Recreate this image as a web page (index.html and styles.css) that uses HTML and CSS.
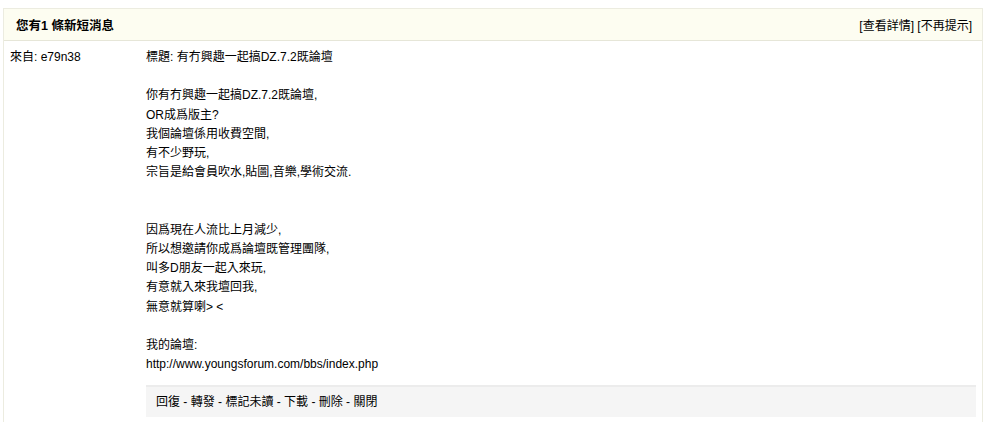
FILE: index.html
```html
<!DOCTYPE html>
<html lang="zh-Hant">
<head>
<meta charset="utf-8">
<title>短消息</title>
<link rel="stylesheet" href="styles.css">
</head>
<body>
<div class="box">
  <div class="head">
    <span class="title">您有1 條新短消息</span>
    <span class="links"><a href="#">[查看詳情]</a> <a href="#">[不再提示]</a></span>
  </div>
  <div class="content">
    <div class="from">來自: e79n38</div>
    <div class="msg">
      <div class="subject">標題: 有冇興趣一起搞DZ.7.2既論壇</div>
      <div class="text">
        <p>你有冇興趣一起搞DZ.7.2既論壇,<br>OR成爲版主?<br>我個論壇係用收費空間,<br>有不少野玩,<br>宗旨是給會員吹水,貼圖,音樂,學術交流.</p>
        <p class="gap2">因爲現在人流比上月減少,<br>所以想邀請你成爲論壇既管理團隊,<br>叫多D朋友一起入來玩,<br>有意就入來我壇回我,<br>無意就算喇&gt; &lt;</p>
        <p>我的論壇:<br>http://www.youngsforum.com/bbs/index.php</p>
      </div>
      <div class="actions"><a href="#">回復</a> - <a href="#">轉發</a> - <a href="#">標記未讀</a> - <a href="#">下載</a> - <a href="#">刪除</a> - <a href="#">關閉</a></div>
    </div>
  </div>
</div>
</body>
</html>
```
FILE: styles.css
```css
html, body {
  margin: 0;
  padding: 0;
  background: #ffffff;
}
body {
  padding: 8px 2px 0 3px;
  font-family: "Liberation Sans", "Noto Sans CJK TC", sans-serif;
  font-size: 12px;
  color: #000;
}
a {
  color: #000;
  text-decoration: none;
}
.box {
  border: 1px solid #ecece0;
  border-bottom: none;
  min-height: 420px;
  box-sizing: border-box;
}
.head {
  height: 31px;
  background: #fdfdf1;
  border-bottom: 1px solid #e6e6d8;
  display: flex;
  align-items: center;
  justify-content: space-between;
  padding: 0 10px 0 12px;
}
.title {
  font-weight: bold;
  font-size: 12.5px;
}
.content {
  display: flex;
  padding-top: 7px;
  line-height: 19.2px;
}
.from {
  width: 136px;
  padding-left: 6px;
  flex: none;
}
.msg {
  flex: 1;
  padding-right: 6px;
}
.text p {
  margin: 19.2px 0 0 0;
}
.text p.gap2 {
  margin-top: 38.4px;
}
.actions {
  margin-top: 11px;
  background: #f5f5f5;
  border-top: 2px solid #ececec;
  height: 30px;
  line-height: 30px;
  padding-left: 10px;
}
```
